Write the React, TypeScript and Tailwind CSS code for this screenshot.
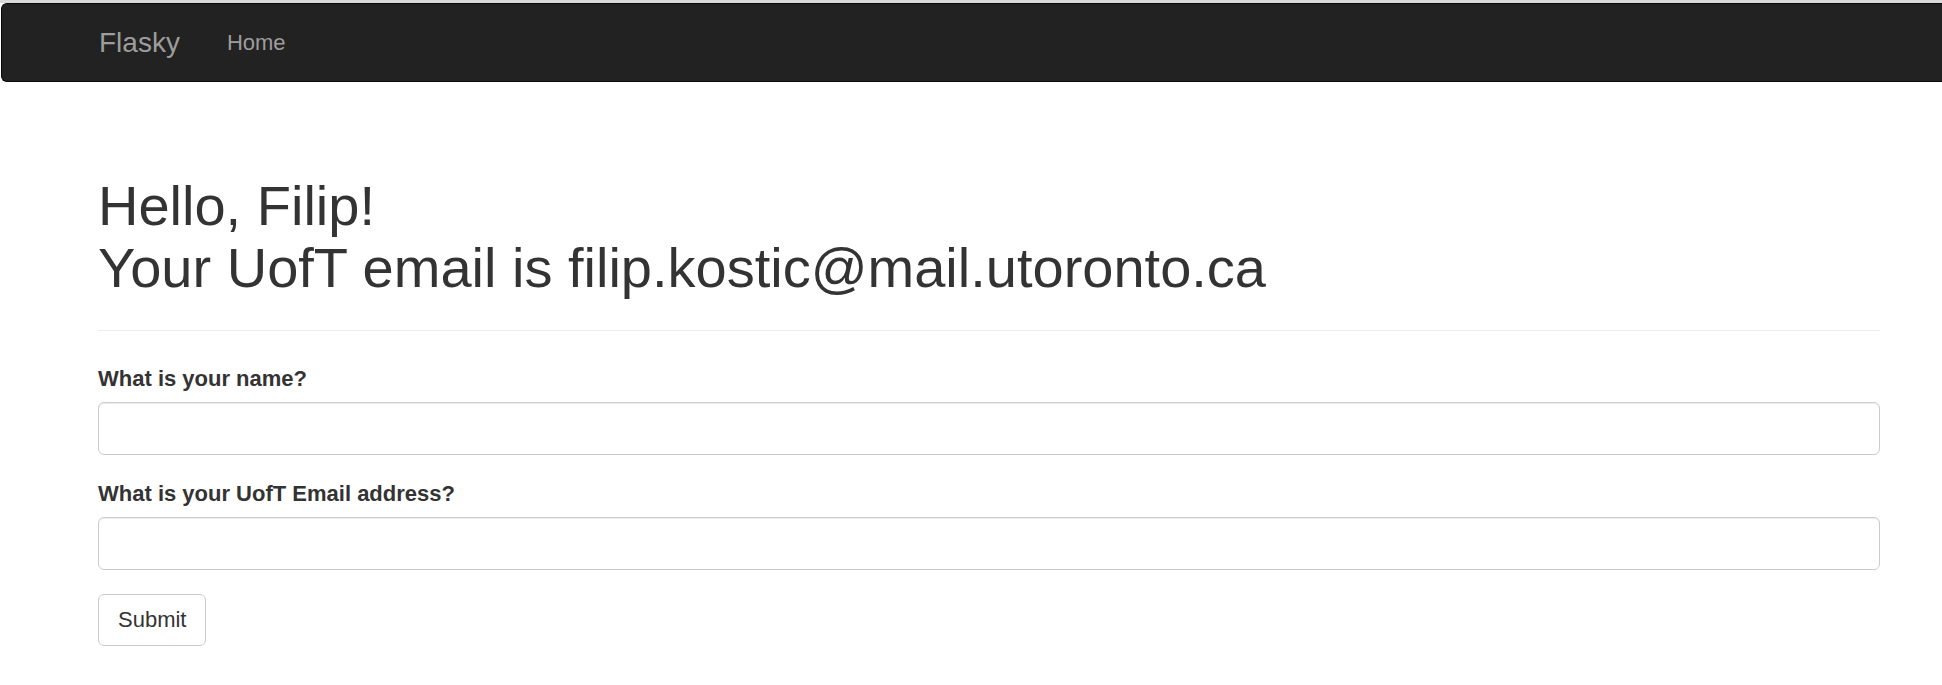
export default function App() {
  return (
    <div className="min-h-[685px] bg-white font-['Liberation_Sans',Arial,sans-serif] text-[#333] overflow-hidden">
      <div className="h-[3px] bg-[#dadada]" />
      <nav className="h-[79px] ml-[1px] flex items-center rounded-l-[6px] border border-r-0 border-[#080808] bg-[#222] pl-[97px]">
        <a className="text-[28px] leading-none text-[#9d9d9d]">Flasky</a>
        <a className="ml-[47px] text-[22px] leading-none text-[#9d9d9d]">Home</a>
      </nav>

      <main className="pl-[98px] pr-[62px]">
        <div className="mt-[93px] border-b border-[#eee] pb-[14px]">
          <h1 className="mb-[18px] text-[56px] leading-[61.6px] font-normal">
            Hello, Filip!
            <br />
            Your UofT email is filip.kostic@mail.utoronto.ca
          </h1>
        </div>

        <form className="mt-[32px]">
          <div className="mb-[23px]">
            <label className="mb-[8px] block text-[22px] leading-[31px] font-bold">What is your name?</label>
            <input
              type="text"
              className="block h-[53px] w-full rounded-[6px] border border-[#ccc] px-[19px] text-[22px] shadow-[inset_0_1px_1px_rgba(0,0,0,0.075)] outline-none"
            />
          </div>
          <div className="mb-[24px]">
            <label className="mb-[8px] block text-[22px] leading-[31px] font-bold">What is your UofT Email address?</label>
            <input
              type="text"
              className="block h-[53px] w-full rounded-[6px] border border-[#ccc] px-[19px] text-[22px] shadow-[inset_0_1px_1px_rgba(0,0,0,0.075)] outline-none"
            />
          </div>
          <button
            type="button"
            className="h-[52px] rounded-[6px] border border-[#ccc] bg-white px-[19px] text-[22px] leading-none text-[#333]"
          >
            Submit
          </button>
        </form>
      </main>
    </div>
  )
}
